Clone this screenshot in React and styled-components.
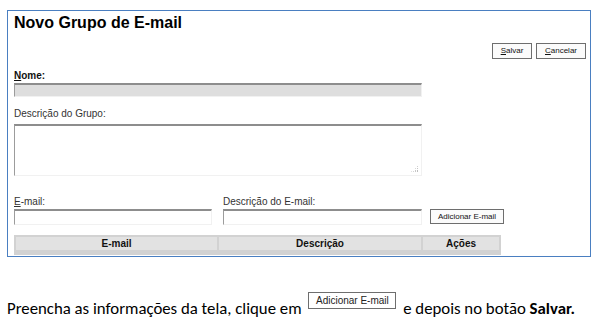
import React from 'react';
import styled, { createGlobalStyle } from 'styled-components';

const GlobalStyle = createGlobalStyle`
  html, body {
    margin: 0;
    padding: 0;
    background: #ffffff;
  }

  body {
    font-family: 'Liberation Sans', Arial, sans-serif;
    color: #000;
  }
`;

export default function App() {
  return (
    <Page>
      <GlobalStyle />
      <Frame>
        <Title>Novo Grupo de E-mail</Title>

        <Toolbar>
          <FormButton $width={40}>
            <u>S</u>alvar
          </FormButton>
          <FormButton $width={50}>
            <u>C</u>ancelar
          </FormButton>
        </Toolbar>

        <Label $bold $top={11}>
          <u>N</u>ome:
        </Label>
        <TextInput $width={408} $height={14} $disabled readOnly />

        <Label $top={11}>Descrição do Grupo:</Label>
        <AreaWrap>
          <TextArea />
          <Grip width="8" height="7" viewBox="0 0 8 7">
            <rect x="6" y="0" width="1" height="1" fill="#d0d0d0" />
            <rect x="6" y="2" width="1" height="1" fill="#c4c4c4" />
            <rect x="4" y="2" width="1" height="1" fill="#d8d8d8" />
            <rect x="6" y="4" width="1" height="2" fill="#bdbdbd" />
            <rect x="4" y="4" width="1" height="2" fill="#c8c8c8" />
            <rect x="2" y="5" width="1" height="1" fill="#d4d4d4" />
            <rect x="0" y="5" width="1" height="1" fill="#e2e2e2" />
          </Grip>
        </AreaWrap>

        <EmailRow>
          <Field $width={198}>
            <Label>
              <u>E</u>-mail:
            </Label>
            <TextInput $width={198} $height={16} />
          </Field>
          <Field $width={199}>
            <Label>Descrição do E-mail:</Label>
            <TextInput $width={199} $height={16} />
          </Field>
          <AddButton>Adicionar E-mail</AddButton>
        </EmailRow>

        <HeaderBar>
          <HeaderCell>E-mail</HeaderCell>
          <HeaderCell>Descrição</HeaderCell>
          <HeaderCell>Ações</HeaderCell>
        </HeaderBar>
      </Frame>

      <Instruction>
        Preencha as informações da tela, clique em{' '}
        <InlineButton>Adicionar E-mail</InlineButton>{' '}
        e depois no botão <b>Salvar.</b>
      </Instruction>
    </Page>
  );
}

const Page = styled.div`
  padding: 10px 0 0 7px;
`;

const Frame = styled.div`
  box-sizing: border-box;
  width: 584px;
  height: 247px;
  border: 1px solid #4a7fc1;
  padding: 3px 4px 2px 6px;
  display: flex;
  flex-direction: column;
  align-items: flex-start;
`;

const Title = styled.h1`
  margin: 0;
  font-size: 16px;
  line-height: 18px;
  font-weight: bold;
  color: #000;
`;

const Toolbar = styled.div`
  align-self: stretch;
  display: flex;
  justify-content: flex-end;
  gap: 4px;
  margin-top: 11px;
`;

const FormButton = styled.button`
  box-sizing: border-box;
  width: ${(p) => p.$width}px;
  height: 16px;
  padding: 0;
  border: 1px solid #6e6e6e;
  background: #fbfbfb;
  font-family: 'Liberation Sans', Arial, sans-serif;
  font-size: 8px;
  line-height: 14px;
  color: #111;
  cursor: pointer;
`;

const Label = styled.label`
  display: block;
  margin-top: ${(p) => p.$top || 0}px;
  font-size: 10px;
  line-height: 12px;
  font-weight: ${(p) => (p.$bold ? 'bold' : 'normal')};
  color: ${(p) => (p.$bold ? '#111' : '#333')};
`;

const TextInput = styled.input`
  box-sizing: border-box;
  display: block;
  width: ${(p) => p.$width}px;
  height: ${(p) => p.$height}px;
  margin: 1px 0 0;
  padding: 0 2px;
  background: ${(p) => (p.$disabled ? '#dedede' : '#ffffff')};
  border-style: solid;
  border-width: 2px 1px 1px 1px;
  border-color: #8d8d8d #f1f1f1 #f1f1f1 #9c9c9c;
  outline: none;
  font-size: 10px;
`;

const AreaWrap = styled.div`
  position: relative;
  margin-top: 4px;
`;

const TextArea = styled.textarea`
  box-sizing: border-box;
  display: block;
  width: 408px;
  height: 52px;
  margin: 0;
  padding: 2px;
  resize: none;
  background: #fff;
  border-style: solid;
  border-width: 2px 1px 1px 1px;
  border-color: #8d8d8d #f1f1f1 #f1f1f1 #9c9c9c;
  outline: none;
`;

const Grip = styled.svg`
  position: absolute;
  right: 3px;
  bottom: 3px;
`;

const EmailRow = styled.div`
  display: flex;
  align-items: flex-end;
  margin-top: 20px;
`;

const Field = styled.div`
  width: ${(p) => p.$width}px;
  margin-right: 11px;

  & + & {
    margin-right: 8px;
  }
`;

const AddButton = styled.button`
  box-sizing: border-box;
  width: 74px;
  height: 15px;
  margin-bottom: 1px;
  padding: 0;
  border: 1px solid #6e6e6e;
  background: #fbfbfb;
  font-family: 'Liberation Sans', Arial, sans-serif;
  font-size: 8px;
  line-height: 13px;
  color: #111;
`;

const HeaderBar = styled.div`
  display: grid;
  grid-template-columns: 201px 202px 76px;
  gap: 2px;
  padding: 2px 2px 5px;
  margin-top: 10px;
  background: #d2d2d2;
`;

const HeaderCell = styled.div`
  height: 13px;
  background: #e2e2e2;
  font-size: 10px;
  line-height: 13px;
  font-weight: bold;
  text-align: center;
  color: #111;
`;

const Instruction = styled.p`
  margin: 35px 0 0;
  font-family: Calibri, Carlito, Lato, sans-serif;
  font-size: 16.8px;
  line-height: 20px;
  white-space: nowrap;
  color: #000;

  b {
    font-weight: bold;
  }
`;

const InlineButton = styled.span`
  display: inline-block;
  box-sizing: border-box;
  width: 88px;
  height: 17px;
  margin: 0 3px 0 3px;
  border: 1px solid #6e6e6e;
  background: #fff;
  font-family: 'Liberation Sans', Arial, sans-serif;
  font-size: 10px;
  line-height: 15px;
  text-align: center;
  color: #222;
  vertical-align: 10px;
`;
